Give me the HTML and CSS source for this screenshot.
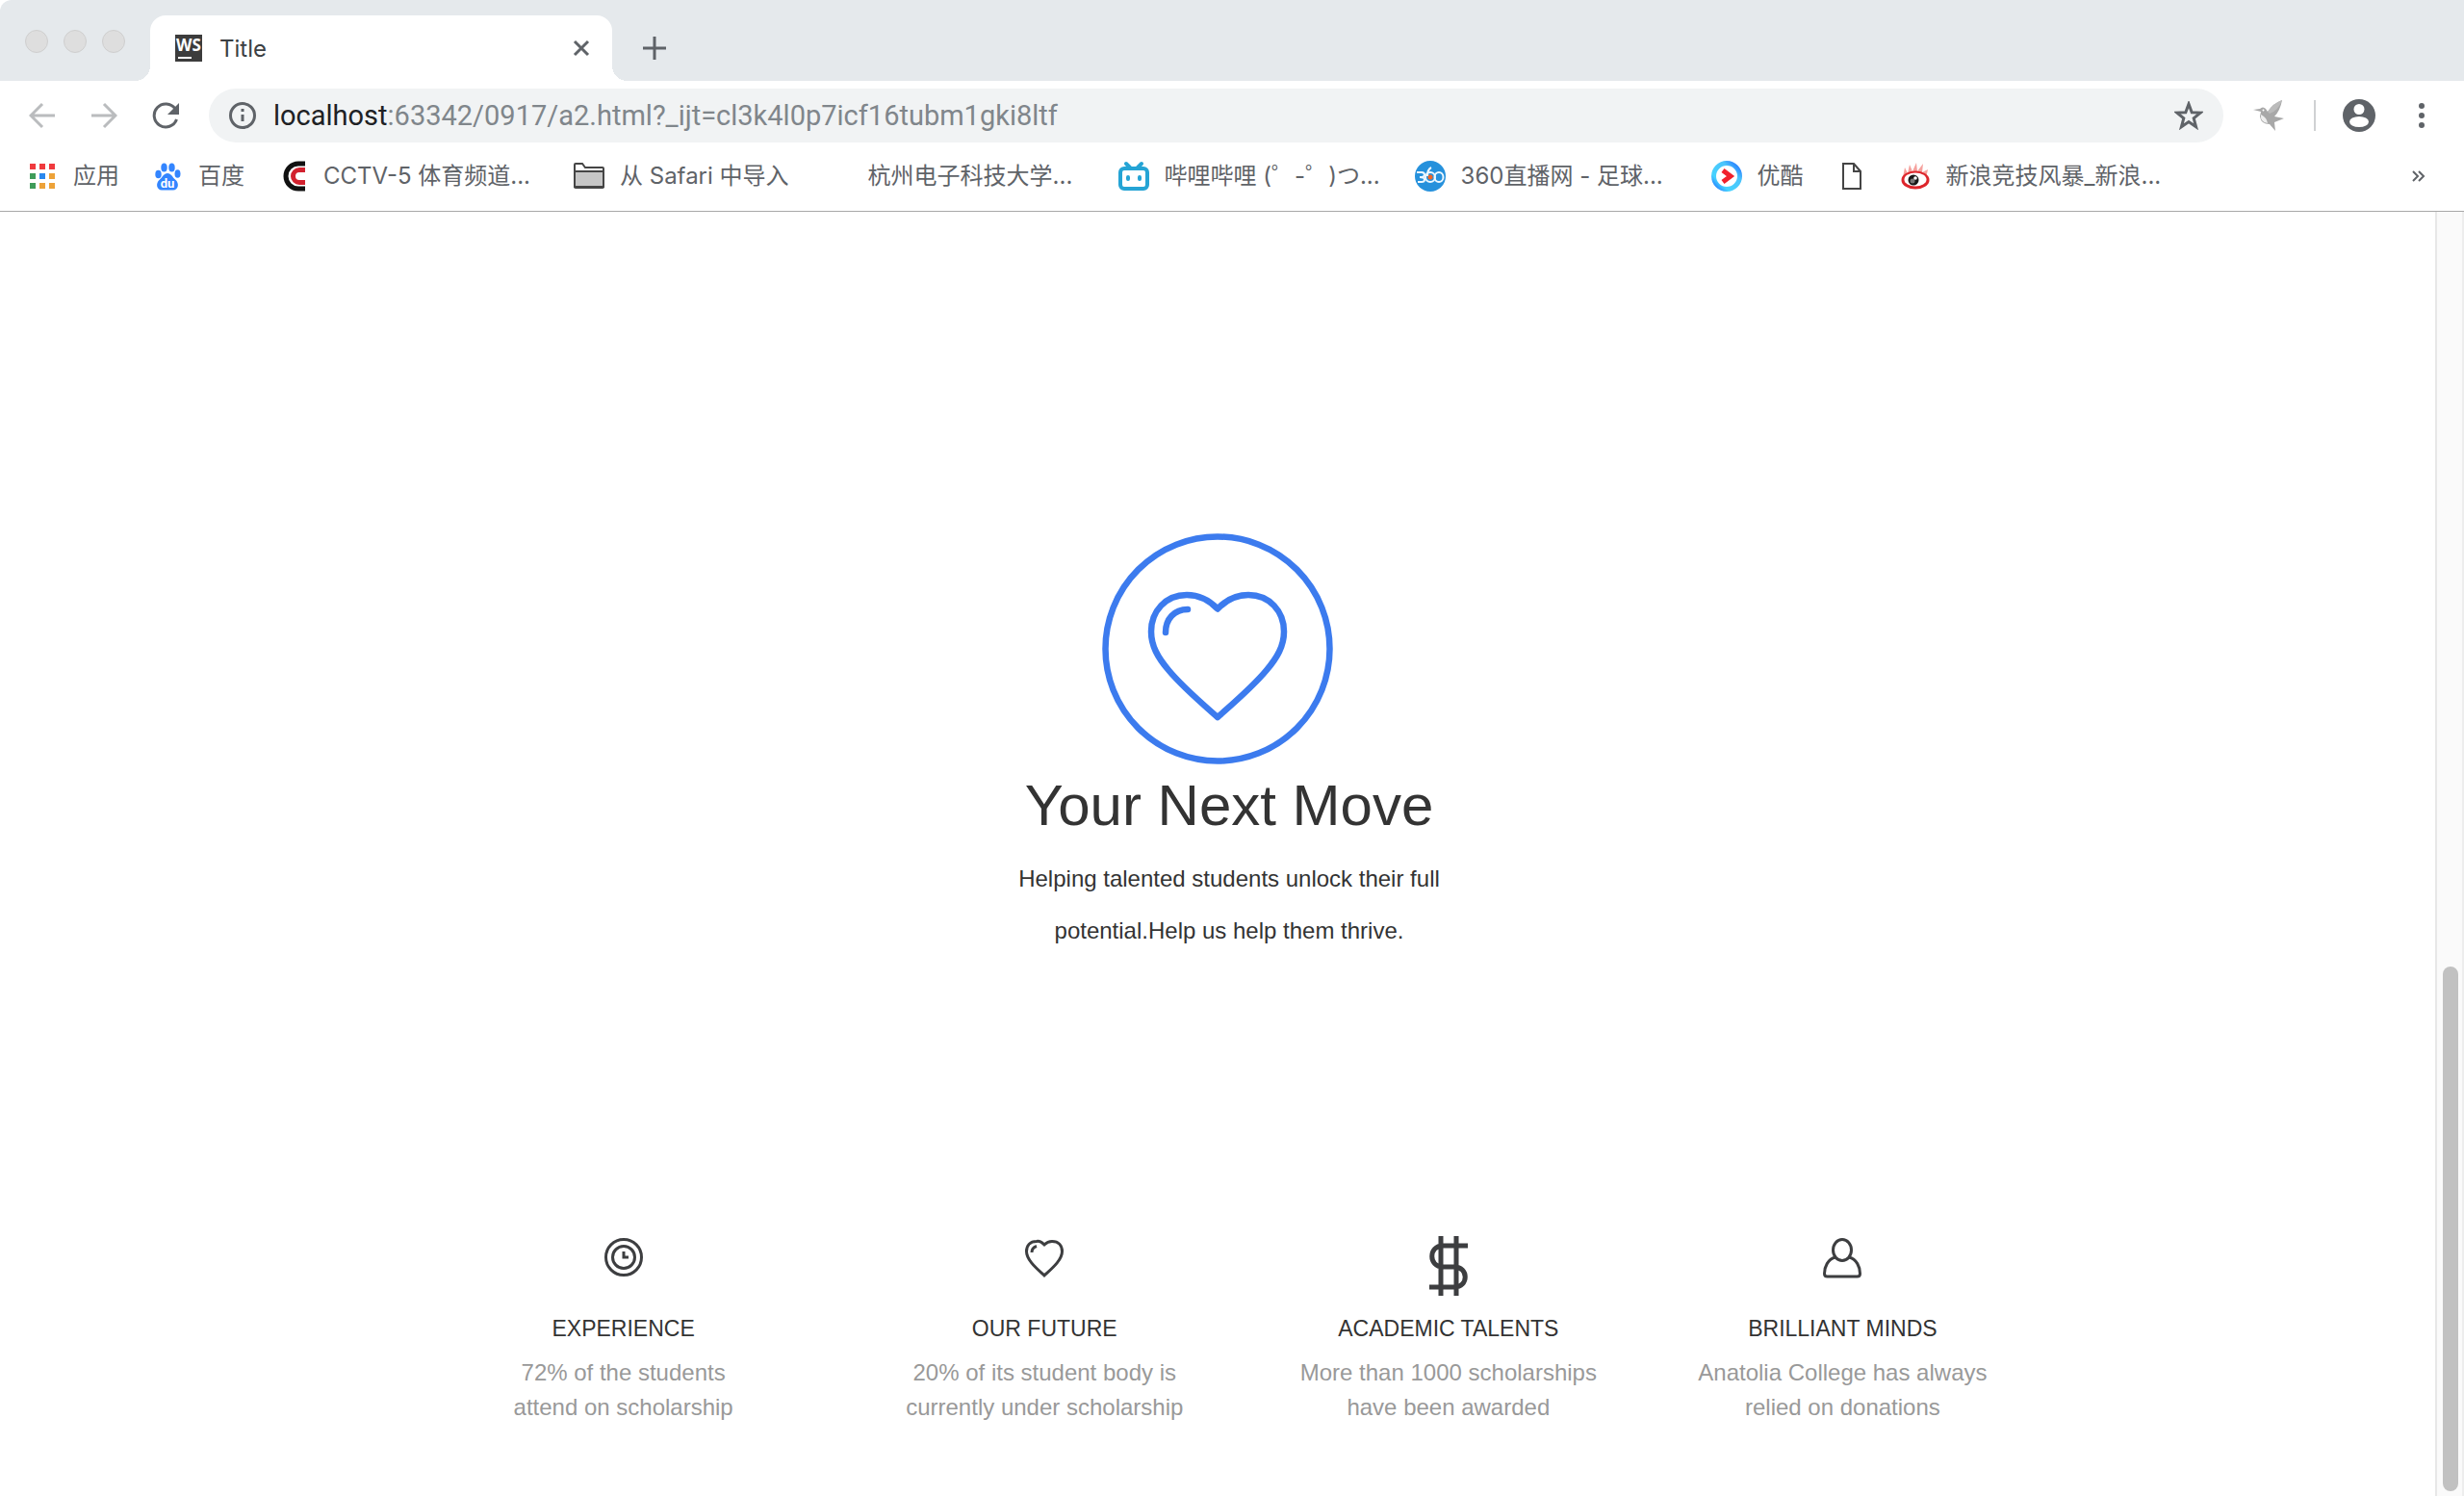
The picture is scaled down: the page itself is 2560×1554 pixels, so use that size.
FILE: index.html
```html
<!DOCTYPE html>
<html lang="zh-CN">
<head>
<meta charset="utf-8">
<title>Title</title>
<link rel="stylesheet" href="styles.css">
</head>
<body>
<header class="browser">
  <div class="tabstrip">
    <div class="lights"><i></i><i></i><i></i></div>
    <div class="tab">
      <svg class="ws" width="28" height="28" viewBox="0 0 28 28"><rect width="28" height="28" fill="#3c3c3c"/><text x="14" y="17" text-anchor="middle">WS</text><path d="M3 24h14" stroke="#fff" stroke-width="2"/></svg>
      <span class="tab-title">Title</span>
      <button class="icon-btn" aria-label="Close tab"><svg width="20" height="20" viewBox="0 0 20 20"><path d="M3 3l14 14M17 3L3 17" class="line"/></svg></button>
    </div>
    <button class="icon-btn new-tab" aria-label="New tab"><svg width="24" height="24" viewBox="0 0 24 24"><path d="M12 0v24M0 12h24" class="line"/></svg></button>
  </div>
  <div class="toolbar">
    <div class="nav-group">
      <button class="icon-btn" aria-label="Back"><svg width="28" height="28" viewBox="0 0 28 28"><path d="M27 14H3M14 2L2 14l12 12" class="line pale"/></svg></button>
      <button class="icon-btn" aria-label="Forward"><svg width="28" height="28" viewBox="0 0 28 28"><path d="M1 14h24M14 2l12 12-12 12" class="line pale"/></svg></button>
      <button class="icon-btn" aria-label="Reload"><svg width="28" height="28" viewBox="0 0 28 28"><path d="M24 7A12 12 0 1 0 25.500 18" class="line"/><path d="M28 1v12H16z" fill="#5f6368"/></svg></button>
    </div>
    <div class="omnibox">
      <svg width="28" height="28" viewBox="0 0 28 28"><circle cx="14" cy="14" r="12.500" class="line"/><path d="M14 13v7M14 7v3" class="line"/></svg>
      <div class="url" role="textbox" aria-label="Address"><span class="host">localhost</span>:63342/0917/a2.html?_ijt=cl3k4l0p7icf16tubm1gki8ltf</div>
      <button class="icon-btn" aria-label="Bookmark"><svg width="30" height="30" viewBox="0 0 30 30"><path d="M15 3l3.200 8.700 9 .4-7 5.700 2.400 9L15 21.600 7.400 26.800l2.400-9-7-5.700 9-.4z" class="line"/></svg></button>
    </div>
    <div class="action-group">
      <button class="icon-btn" aria-label="Extension"><svg width="36" height="36" viewBox="0 0 36 36"><path d="M1 12l7-1q3-3 6 0l2 3Q22 5 31 2q-2 11-8 17l10 2-10 4 1 9-6-7q-9 0-10-8l1-5z" fill="#a8a8a8"/><path d="M16 14Q22 5 31 2q-4 11-13 14z" fill="#bbb"/><path d="M9 17q-1 8 7 9-1-6-7-9z" fill="#eee"/><circle cx="11.500" cy="12.500" r="1" fill="#fff"/></svg></button>
      <i class="divider"></i>
      <button class="icon-btn" aria-label="Profile"><svg width="34" height="34" viewBox="0 0 34 34"><circle cx="17" cy="17" r="17" fill="#5f6368"/><circle cx="17" cy="10.500" r="5.500" fill="#fff"/><ellipse cx="17" cy="23.500" rx="10" ry="5.500" fill="#fff"/></svg></button>
      <button class="icon-btn menu" aria-label="Menu"><svg width="8" height="28" viewBox="0 0 8 28"><g fill="#5f6368"><circle cx="4" cy="4" r="3"/><circle cx="4" cy="14" r="3"/><circle cx="4" cy="24" r="3"/></g></svg></button>
    </div>
  </div>
  <nav class="bookmarks" aria-label="Bookmarks">
    <a href="#"><svg viewBox="0 0 32 32"><path d="M3 3h6v6H3zM13 3h6v6h-6zM23 3h6v6h-6z" fill="#f03a3e"/><path d="M3 13h6v6H3zM3 23h6v6H3z" fill="#3f9c5a"/><path d="M13 13h6v6h-6z" fill="#2a88ee"/><path d="M23 13h6v6h-6zM13 23h6v6h-6zM23 23h6v6h-6z" fill="#eda239"/></svg><span>应用</span></a>
    <a href="#"><svg viewBox="0 0 32 32" fill="#3385ff"><ellipse cx="12.500" cy="7" rx="3.200" ry="4.500"/><ellipse cx="20.500" cy="7" rx="3.200" ry="4.500"/><ellipse cx="6.500" cy="14" rx="3.200" ry="4.300"/><ellipse cx="26.500" cy="13.500" rx="3" ry="4.300"/><path d="M16 13c4 0 5 4 8 6.500 5 4 3 11-2 11H10c-5 0-7-7-2-11C11 17 12 13 16 13z"/><text class="du" x="16" y="27.500" text-anchor="middle">du</text></svg><span>百度</span></a>
    <a href="#" class="long"><svg viewBox="0 0 32 32" fill="none"><path d="M29 3h-7a13 13 0 0 0 0 26h7" stroke="#111" stroke-width="5"/><path d="M29 9.500h-6a6.500 6.500 0 0 0 0 13h6" stroke="#d2222f" stroke-width="5"/></svg><span>CCTV-5 体育频道...</span></a>
    <a href="#"><svg viewBox="0 0 32 32" stroke="#454545" stroke-width="2"><path d="M1 27V4q0-1 1-1h7l3 4h18q1 0 1 1v19q0 1-1 1H2q-1 0-1-1z" fill="#fff"/><path d="M1 11h30v16H1z" fill="#c6c6c6"/></svg><span>从 Safari 中导入</span></a>
    <a href="#" class="long"><i class="blank"></i><span>杭州电子科技大学...</span></a>
    <a href="#" class="long"><svg viewBox="0 0 32 32" fill="none" stroke="#25a4d5" stroke-width="4" stroke-linecap="round"><rect x="2" y="8" width="28" height="21" rx="4"/><path d="M8 3l4 4M24 3l-4 4M10 17v2M22 17v2"/></svg><span>哔哩哔哩 (゜-゜)つ...</span></a>
    <a href="#" class="long"><svg viewBox="0 0 32 32"><circle cx="16" cy="16" r="16" fill="#2691dc"/><g fill="none" stroke="#eef8ff" stroke-width="2"><path d="M2 12h5q3 0 3 2.500T5 17q5 0 5 2.500T7 22H3M17 7q-4 2-4 9"/><circle cx="16" cy="17" r="5"/><ellipse cx="25" cy="17" rx="4.500" ry="5"/></g><circle cx="16" cy="17" r="2.500" fill="#f06426"/></svg><span>360直播网 - 足球...</span></a>
    <a href="#"><svg viewBox="0 0 32 32"><defs><linearGradient id="yk" x1="1" y1="0" x2="0" y2="1"><stop offset="0" stop-color="#1e6bff"/><stop offset=".3" stop-color="#4cc4fb"/><stop offset=".75" stop-color="#45d3ff"/><stop offset="1" stop-color="#1e6bff"/></linearGradient></defs><circle cx="16" cy="16" r="13.500" fill="#fff" stroke="url(#yk)" stroke-width="5"/><path d="M12 10l8 6-8 6" fill="none" stroke="#f1212c" stroke-width="5"/></svg><span>优酷</span></a>
    <a href="#" aria-label="Page"><svg viewBox="0 0 32 32" fill="none" stroke="#454545" stroke-width="2"><path d="M7 3h11l7 8v18H7zM18 3v8h7"/></svg></a>
    <a href="#" class="long"><svg viewBox="0 0 32 32"><path d="M3 17L5 7l3 6 2-9 3 7 4-9 1 9 6-8-1 9 6-3-2 9z" fill="#f5a19d"/><ellipse cx="16" cy="20" rx="14.500" ry="9.500" fill="#dd252b"/><ellipse cx="16" cy="19.500" rx="11.500" ry="7" fill="#fff"/><circle cx="14" cy="20" r="5.500" fill="#171717"/><circle cx="13" cy="21" r="2.500" fill="#777"/><circle cx="16" cy="18" r="1.800" fill="#fff"/></svg><span>新浪竞技风暴_新浪...</span></a>
    <button class="icon-btn more" aria-label="More bookmarks"><svg width="14" height="14" viewBox="0 0 14 14"><path d="M1 2l5 5-5 5M7 2l5 5-5 5" class="line thin"/></svg></button>
  </nav>
</header>
<div class="viewport">
  <main class="page">
    <section class="hero">
      <svg class="emblem" width="240" height="240" viewBox="0 0 240 240" fill="none" stroke="#3c7bee" stroke-width="6.500" stroke-linecap="round" stroke-linejoin="round"><circle cx="120" cy="120" r="116.500"/><path d="M120 78.500C110 68 100 64 88 64 66 64 51 81 51 102c0 15 7 27 18 40 14 17 34 34 51 49 17-15 37-32 51-49 11-13 18-25 18-40 0-21-15-38-37-38-12 0-22 4-32 14.500z"/><path d="M66 103c0-14 9-24 23-24"/></svg>
      <h1>Your Next Move</h1>
      <p>Helping talented students unlock their full<br>potential.Help us help them thrive.</p>
    </section>
    <section class="features">
      <article>
        <svg width="40" height="64" viewBox="0 0 40 64" class="glyph"><circle cx="20" cy="22" r="18.500"/><circle cx="20" cy="22" r="11.500"/><path d="M20 16v6h5"/></svg>
        <h2>EXPERIENCE</h2>
        <p>72% of the students<br>attend on scholarship</p>
      </article>
      <article>
        <svg width="40" height="64" viewBox="0 0 40 64" class="glyph"><path d="M20 9C17 6 14 5 12 5.500 5 5.500 1.500 10 1.500 16c0 9 11 18 18.500 25 7.500-7 18.500-16 18.500-25 0-6-3.500-10.500-10.500-10.500-3 0-5 .5-8 3.500z"/><path d="M7 17q0-5 5-6.500"/></svg>
        <h2>OUR FUTURE</h2>
        <p>20% of its student body is<br>currently under scholarship</p>
      </article>
      <article>
        <svg width="40" height="64" viewBox="0 0 40 64" class="glyph thick"><path d="M12 0v62M28 0v62M40 10H14C-1 10-1 32 14 32h12c15 0 15 21 0 21H0"/></svg>
        <h2>ACADEMIC TALENTS</h2>
        <p>More than 1000 scholarships<br>have been awarded</p>
      </article>
      <article>
        <svg width="40" height="64" viewBox="0 0 40 64" class="glyph"><ellipse cx="20" cy="14.500" rx="9.500" ry="11"/><path d="M13 22C5 24 1.500 32 1.500 39q0 3 3 3h31q3 0 3-3C38.500 32 35 24 27 22"/></svg>
        <h2>BRILLIANT MINDS</h2>
        <p>Anatolia College has always<br>relied on donations</p>
      </article>
    </section>
  </main>
  <div class="scrollbar"><div class="thumb"></div></div>
</div>
</body>
</html>
```
FILE: styles.css
```css
* { box-sizing: border-box; }

body {
  margin: 0;
  min-height: 100vh;
  display: flex;
  flex-direction: column;
  background: #fff;
  font-family: Roboto, "Noto Sans CJK SC", sans-serif;
}

svg { display: block; flex: none; }

.icon-btn {
  display: flex;
  align-items: center;
  justify-content: center;
  padding: 0;
  border: 0;
  background: none;
}

.line { fill: none; stroke: #5f6368; stroke-width: 3; }
.pale { stroke: #babcbe; }
.thin { stroke-width: 2; }

/* Tab strip */
.tabstrip {
  display: flex;
  height: 84px;
  padding: 16px 0 0 26px;
  background: #e5e9ec;
  border-top-left-radius: 12px;
}

.lights { display: flex; gap: 16px; width: 130px; padding-top: 15px; }
.lights i {
  width: 24px;
  height: 24px;
  border: 1px solid #cfcfcf;
  border-radius: 50%;
  background: #dedede;
}

.tab {
  position: relative;
  display: flex;
  align-items: center;
  gap: 18px;
  width: 480px;
  padding: 0 22px 0 26px;
  background: #fff;
  border-radius: 16px 16px 0 0;
}
.tab::before, .tab::after {
  content: "";
  position: absolute;
  bottom: 0;
  width: 16px;
  height: 16px;
}
.tab::before { right: 100%; background: radial-gradient(circle at 0 0, transparent 16px, #fff 16px); }
.tab::after { left: 100%; background: radial-gradient(circle at 100% 0, transparent 16px, #fff 16px); }
.ws text { fill: #fff; font: 700 17px "Open Sans", sans-serif; }
.tab-title { flex: 1; font-family: Inter, sans-serif; font-size: 24px; color: #3c4043; }
.new-tab { margin-left: 32px; }

/* Toolbar */
.toolbar { display: flex; align-items: center; padding: 8px 24px 0 30px; }
.nav-group { display: flex; gap: 36px; margin-right: 31px; }

.omnibox {
  flex: 1;
  display: flex;
  align-items: center;
  gap: 18px;
  height: 56px;
  padding: 0 21px;
  background: #f1f3f4;
  border-radius: 28px;
}
.url { flex: 1; font-size: 29px; color: #80868b; }
.host { color: #202124; }

.action-group { display: flex; align-items: center; gap: 28px; margin-left: 30px; }
.divider { width: 2px; height: 32px; background: #cfd1d3; }
.menu { width: 40px; }

/* Bookmarks */
.bookmarks {
  display: flex;
  align-items: center;
  gap: 34px;
  height: 72px;
  padding: 0 40px 2px 28px;
  border-bottom: 1px solid #a8a8a8;
}
.bookmarks a {
  display: flex;
  align-items: center;
  gap: 16px;
  color: #5f6368;
  font-family: Inter, "Noto Sans CJK SC", sans-serif;
  font-size: 24px;
  line-height: 36px;
  white-space: nowrap;
  text-decoration: none;
}
.bookmarks a svg, .blank { width: 32px; height: 32px; }
.long span { width: 226px; }
.du { fill: #fff; font: 700 13px Roboto, sans-serif; }
.more { margin-left: auto; }

/* Web page */
.viewport { flex: 1; display: flex; }
.page {
  flex: 1;
  color: #333;
  font-family: "Liberation Sans", Arial, sans-serif;
  text-align: center;
}
.page p, h1, h2 { margin: 0; font-weight: 400; }

.hero { padding: 334px 0 290px; }
.emblem { margin: 0 auto; }
h1 { margin-top: 10px; padding-left: 24px; font-size: 60px; line-height: 66px; }
.hero p { margin-top: 16px; padding-left: 24px; font-size: 24px; line-height: 54px; }

.features {
  display: grid;
  grid-template-columns: 432fr 440fr 396fr 420fr;
  width: 68%;
  margin: 0 auto;
  padding: 0 0 60px 26px;
}
.glyph { margin: 0 auto 14px; fill: none; stroke: #3d3e40; stroke-width: 3; }
.thick { stroke-width: 5; }
h2 { font-size: 23px; line-height: 36px; }
.features p { margin-top: 10px; color: #999; font-size: 24px; line-height: 36px; }

.scrollbar {
  display: flex;
  flex-direction: column;
  justify-content: flex-end;
  width: 30px;
  padding: 0 4px 5px 6px;
  background: #fafafa;
  border-left: 2px solid #e7e7e7;
  border-right: 2px solid #ededed;
}
.thumb { height: 41%; border-radius: 8px; background: #c1c1c1; }
```
